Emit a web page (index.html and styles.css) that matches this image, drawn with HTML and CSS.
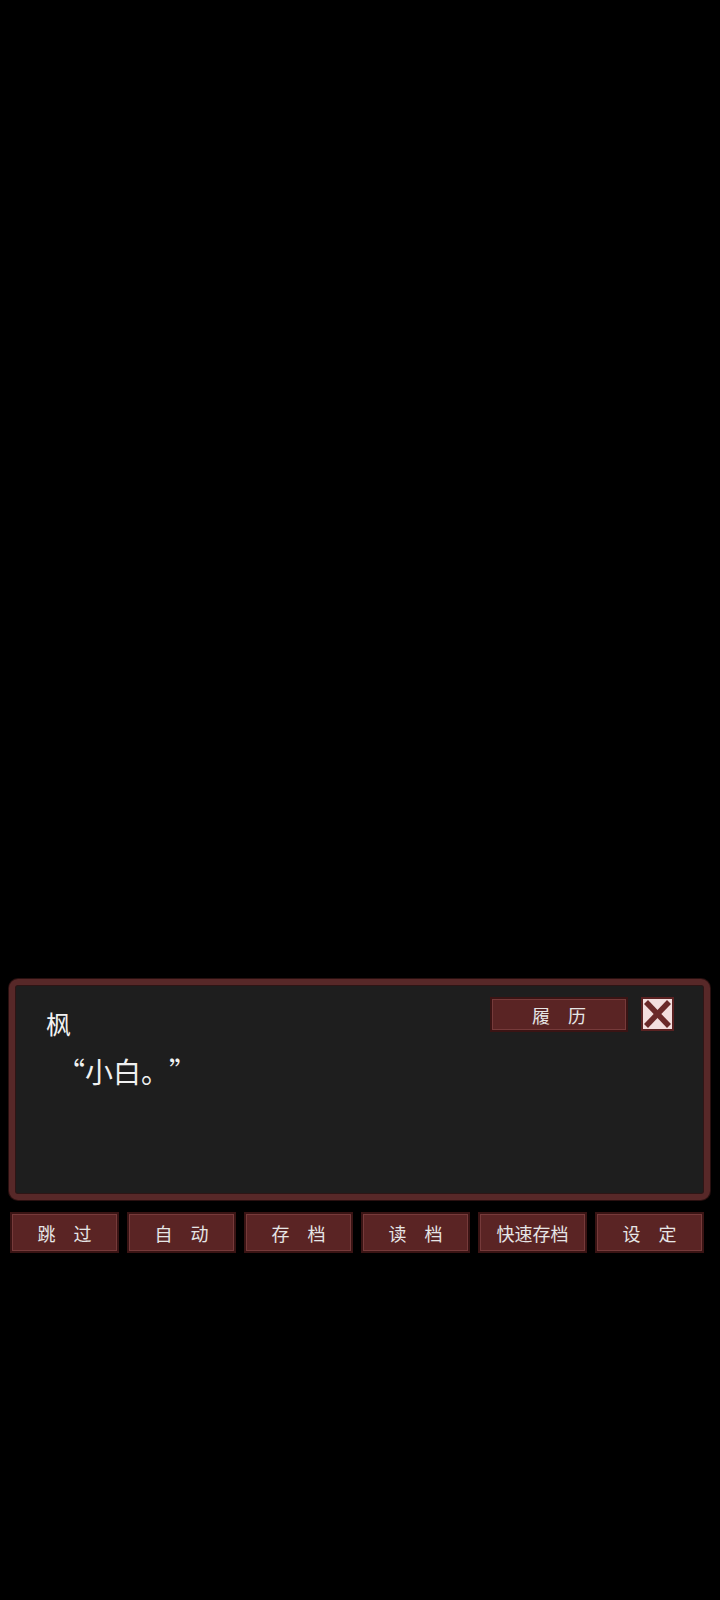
FILE: index.html
```html
<!DOCTYPE html>
<html lang="zh-CN">
<head>
    <meta charset="UTF-8">
    <meta name="viewport" content="width=device-width, initial-scale=1.0">
    <title>对话</title>
    <link rel="stylesheet" href="styles.css">
</head>
<body>

    <div class="screen">
        <div class="scene"></div>

        <div class="dialog">
            <div class="dialog-head">
                <div class="speaker">枫</div>
                <div class="head-actions">
                    <button class="btn btn-log">履　历</button>
                    <button class="btn-close" aria-label="关闭">
                        <svg width="29" height="30" viewBox="0 0 29 30">
                            <line x1="3" y1="3" x2="26" y2="27" stroke="#6b2a2a" stroke-width="5.5"/>
                            <line x1="26" y1="3" x2="3" y2="27" stroke="#6b2a2a" stroke-width="5.5"/>
                        </svg>
                    </button>
                </div>
            </div>
            <p class="line">“小白。”</p>
        </div>

        <div class="menu">
            <button class="btn">跳　过</button>
            <button class="btn">自　动</button>
            <button class="btn">存　档</button>
            <button class="btn">读　档</button>
            <button class="btn">快速存档</button>
            <button class="btn">设　定</button>
        </div>
    </div>

</body>
</html>
```

FILE: styles.css
```css
body {
    margin: 0;
    background-color: #000;
    font-family: "Noto Sans CJK SC", "Noto Sans", sans-serif;
    color: #eee;
    text-spacing-trim: space-all;
}
.screen {
    width: 720px;
    height: 1600px;
    display: flex;
    flex-direction: column;
}
.scene {
    flex: 0 0 979px;
}
.dialog {
    height: 209px;
    margin: 0 10px 0 9px;
    background-color: #1e1e1e;
    border: 6px solid #572828;
    border-radius: 9px;
    box-shadow: 0 0 0 1px #2a1010, inset 0 0 0 1px #2e1515;
}
.dialog-head {
    display: flex;
    justify-content: space-between;
    align-items: flex-start;
    padding: 12px 30px 0 31px;
}
.speaker {
    margin-top: 14px;
    font-size: 25px;
    line-height: 25px;
    color: #f2f2f2;
}
.head-actions {
    display: flex;
    gap: 13px;
}
.btn {
    font-family: inherit;
    font-size: 18px;
    line-height: 20px;
    color: #e6e6e6;
    background-color: #5a2424;
    border: 2px solid #3a1414;
    box-shadow: inset 0 0 0 1px #763a3a;
    padding: 0;
    cursor: pointer;
}
.btn-log {
    width: 138px;
    height: 35px;
}
.btn-close {
    width: 33px;
    height: 34px;
    padding: 0;
    background-color: #f3dfdf;
    border: 2px solid #5a2222;
    display: flex;
    align-items: center;
    justify-content: center;
    cursor: pointer;
}
.line {
    margin: 21px 0 0 42px;
    font-size: 28px;
    line-height: 28px;
    color: #f0f0f0;
}
.menu {
    display: flex;
    gap: 8px;
    padding: 12px 0 0 10px;
}
.menu .btn {
    width: 109px;
    height: 41px;
}
```
